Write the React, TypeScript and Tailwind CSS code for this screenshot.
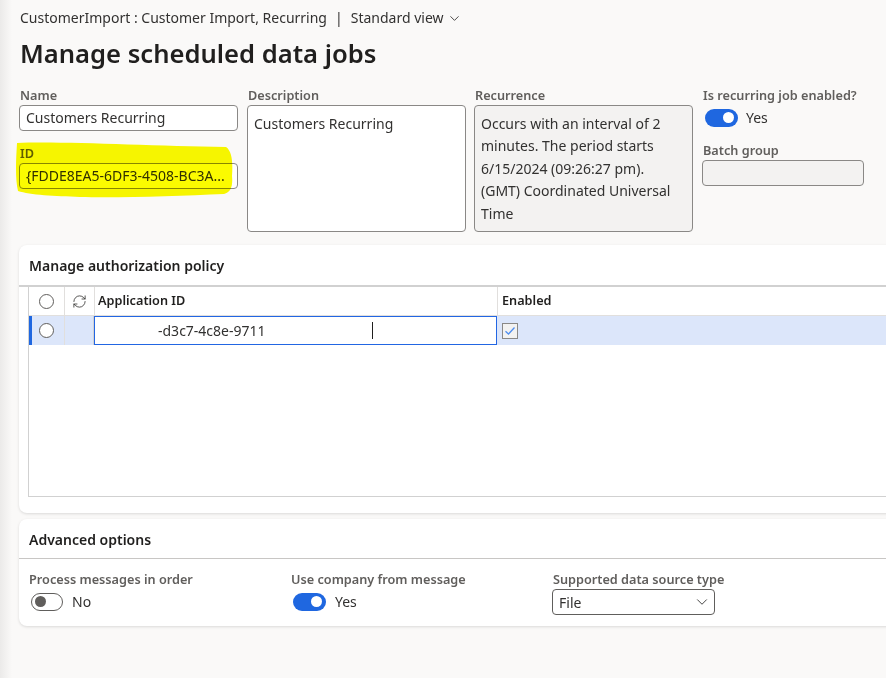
import { ChevronDown, RefreshCw } from "lucide-react";

const font = { fontFamily: '"Segoe UI", "Noto Sans", "Open Sans", sans-serif' };

const Label = ({ children }: { children: React.ReactNode }) => (
  <div className="text-[12.7px] leading-[18px] font-semibold text-[#605e5c] pl-px whitespace-nowrap">
    {children}
  </div>
);

const Toggle = ({ on }: { on: boolean }) =>
  on ? (
    <div className="w-[33px] h-[18px] rounded-full bg-[#1f67e0] flex items-center justify-end pr-[4px]">
      <div className="w-[11px] h-[11px] rounded-full bg-white" />
    </div>
  ) : (
    <div className="w-[32px] h-[18px] rounded-full border border-[#605e5c] bg-white flex items-center pl-[3px]">
      <div className="w-[11px] h-[11px] rounded-full bg-[#605e5c]" />
    </div>
  );

const Circle = () => (
  <div className="w-[15px] h-[15px] rounded-full border border-[#605e5c] bg-white" />
);

export default function App() {
  return (
    <div
      className="relative w-[886px] h-[678px] overflow-hidden bg-[#faf9f8] flex text-[#323130]"
      style={font}
    >
      <div className="w-[12px] shrink-0 bg-gradient-to-r from-[#ebeae9] to-[#faf9f8]" />
      <div className="flex-1 pl-[7px] pt-[8px] flex flex-col">
        {/* header */}
        <div className="flex items-center text-[14px] leading-[20px] pl-px text-[#323130]">
          <span>CustomerImport : Customer Import, Recurring</span>
          <span className="mx-[8px]">|</span>
          <span>Standard view</span>
          <ChevronDown size={15} strokeWidth={1.4} className="ml-[3px]" />
        </div>
        <h1 className="text-[25.6px] leading-[36px] font-semibold text-[#201f1e] mt-[8px] pl-px">
          Manage scheduled data jobs
        </h1>

        {/* fields */}
        <div className="flex mt-[14px] gap-[9px]">
          <div className="w-[219px] flex flex-col">
            <Label>Name</Label>
            <div className="h-[26px] mt-px border border-[#8a8886] rounded-[4px] bg-white px-[6px] text-[14px] leading-[24px]">
              Customers Recurring
            </div>
            <div className="mt-[13px]">
              <Label>ID</Label>
              <div className="h-[26px] mt-px border border-[#8a8886] rounded-[4px] bg-white px-[6px] text-[14px] leading-[24px] whitespace-nowrap overflow-hidden">
                {"{FDDE8EA5-6DF3-4508-BC3A..."}
              </div>
            </div>
          </div>
          <div className="w-[219px] flex flex-col">
            <Label>Description</Label>
            <div className="h-[127px] mt-px border border-[#8a8886] rounded-[4px] bg-white px-[6px] pt-[8px] text-[14px] leading-[20px]">
              Customers Recurring
            </div>
          </div>
          <div className="w-[219px] flex flex-col -ml-px">
            <Label>Recurrence</Label>
            <div className="h-[127px] mt-px border border-[#8a8886] rounded-[4px] bg-[#f3f2f1] px-[6px] pt-[7px] text-[14px] leading-[22.4px]">
              Occurs with an interval of 2<br />
              minutes. The period starts<br />
              6/15/2024 (09:26:27 pm).<br />
              (GMT) Coordinated Universal<br />
              Time
            </div>
          </div>
          <div className="w-[162px] flex flex-col">
            <Label>Is recurring job enabled?</Label>
            <div className="flex items-center gap-[8px] mt-[3px] pl-[3px] text-[14px]">
              <Toggle on />
              <span>Yes</span>
            </div>
            <div className="mt-[13px]">
              <Label>Batch group</Label>
              <div className="h-[26px] mt-px border border-[#8a8886] rounded-[4px] bg-[#f3f2f1]" />
            </div>
          </div>
        </div>

        {/* authorization policy */}
        <div className="mt-[13px] -mr-[20px] bg-white rounded-l-[8px] shadow-[0_1px_3px_rgba(0,0,0,0.13)] pb-[16px]">
          <div className="h-[42px] flex items-center px-[10px] text-[14px] font-semibold text-[#201f1e] border-b-2 border-[#d1d1d1]">
            Manage authorization policy
          </div>
          <div className="ml-[9px] h-[210px] border-l border-b border-[#d1d1d1]">
            <div className="flex h-[29px] border-b border-[#e1dfdd] text-[12.7px] font-semibold text-[#201f1e]">
              <div className="w-[36px] flex items-center justify-center border-r border-[#e1dfdd]">
                <Circle />
              </div>
              <div className="w-[30px] flex items-center justify-center border-r border-[#e1dfdd]">
                <RefreshCw size={15} strokeWidth={1.3} className="text-[#323130]" />
              </div>
              <div className="w-[403px] flex items-center pl-[3px] border-r border-[#e1dfdd]">
                Application ID
              </div>
              <div className="flex-1 flex items-center pl-[4px]">Enabled</div>
            </div>
            <div className="flex h-[29px] bg-[#dce6fa]">
              <div className="w-[36px] flex items-center justify-center border-r border-[#e1dfdd] border-l-[3px] border-l-[#1f67e0] pr-[3px]">
                <Circle />
              </div>
              <div className="w-[29px] border-r border-[#d1d1d1]" />
              <div className="w-[403px] h-[29px] bg-white border border-[#2266e3] flex items-center pl-[63px] text-[14px]">
                <span>-d3c7-4c8e-9711</span>
                <span className="ml-[106px] w-px h-[17px] bg-[#201f1e]" />
              </div>
              <div className="flex-1 flex items-center pl-[5px]">
                <div className="w-[16px] h-[16px] border border-[#8a8886] bg-[#f3f2f1] flex items-center justify-center">
                  <svg width="12" height="12" viewBox="0 0 12 12">
                    <path d="M1.5 6.2 L4.5 9 L10.5 2.5" fill="none" stroke="#4f8ef0" strokeWidth="1.3" />
                  </svg>
                </div>
              </div>
            </div>
          </div>
        </div>

        {/* advanced options */}
        <div className="mt-[6px] -mr-[20px] bg-white rounded-l-[8px] shadow-[0_1px_3px_rgba(0,0,0,0.13)] h-[107px]">
          <div className="h-[40px] flex items-center pt-[2px] px-[10px] text-[14px] font-semibold text-[#201f1e] border-b border-[#c8c6c4]">
            Advanced options
          </div>
          <div className="flex pl-[9px] pt-[11px]">
            <div className="w-[262px]">
              <Label>Process messages in order</Label>
              <div className="flex items-center gap-[9px] mt-[3px] pl-[3px] text-[14px]">
                <Toggle on={false} />
                <span>No</span>
              </div>
            </div>
            <div className="w-[262px]">
              <Label>Use company from message</Label>
              <div className="flex items-center gap-[9px] mt-[3px] pl-[3px] text-[14px]">
                <Toggle on />
                <span>Yes</span>
              </div>
            </div>
            <div className="w-[163px]">
              <Label>Supported data source type</Label>
              <div className="h-[26px] mt-px border border-[#605e5c] rounded-[4px] flex items-center justify-between pl-[6px] pr-[3px] text-[14px]">
                <span>File</span>
                <ChevronDown size={18} strokeWidth={1.2} className="text-[#323130]" />
              </div>
            </div>
          </div>
        </div>
      </div>

      {/* yellow highlighter annotation */}
      <svg
        className="absolute left-0 top-0 pointer-events-none mix-blend-multiply"
        width="886"
        height="678"
      >
        <path
          d="M17 143 C60 141 150 146 226 147 C232 151 233 162 232 176 C233 186 231 192 224 194 C180 196 120 198 80 197 C55 196 30 195 18 191 C15 178 16 160 17 143 Z"
          fill="#fbfb00"
        />
      </svg>
    </div>
  );
}
